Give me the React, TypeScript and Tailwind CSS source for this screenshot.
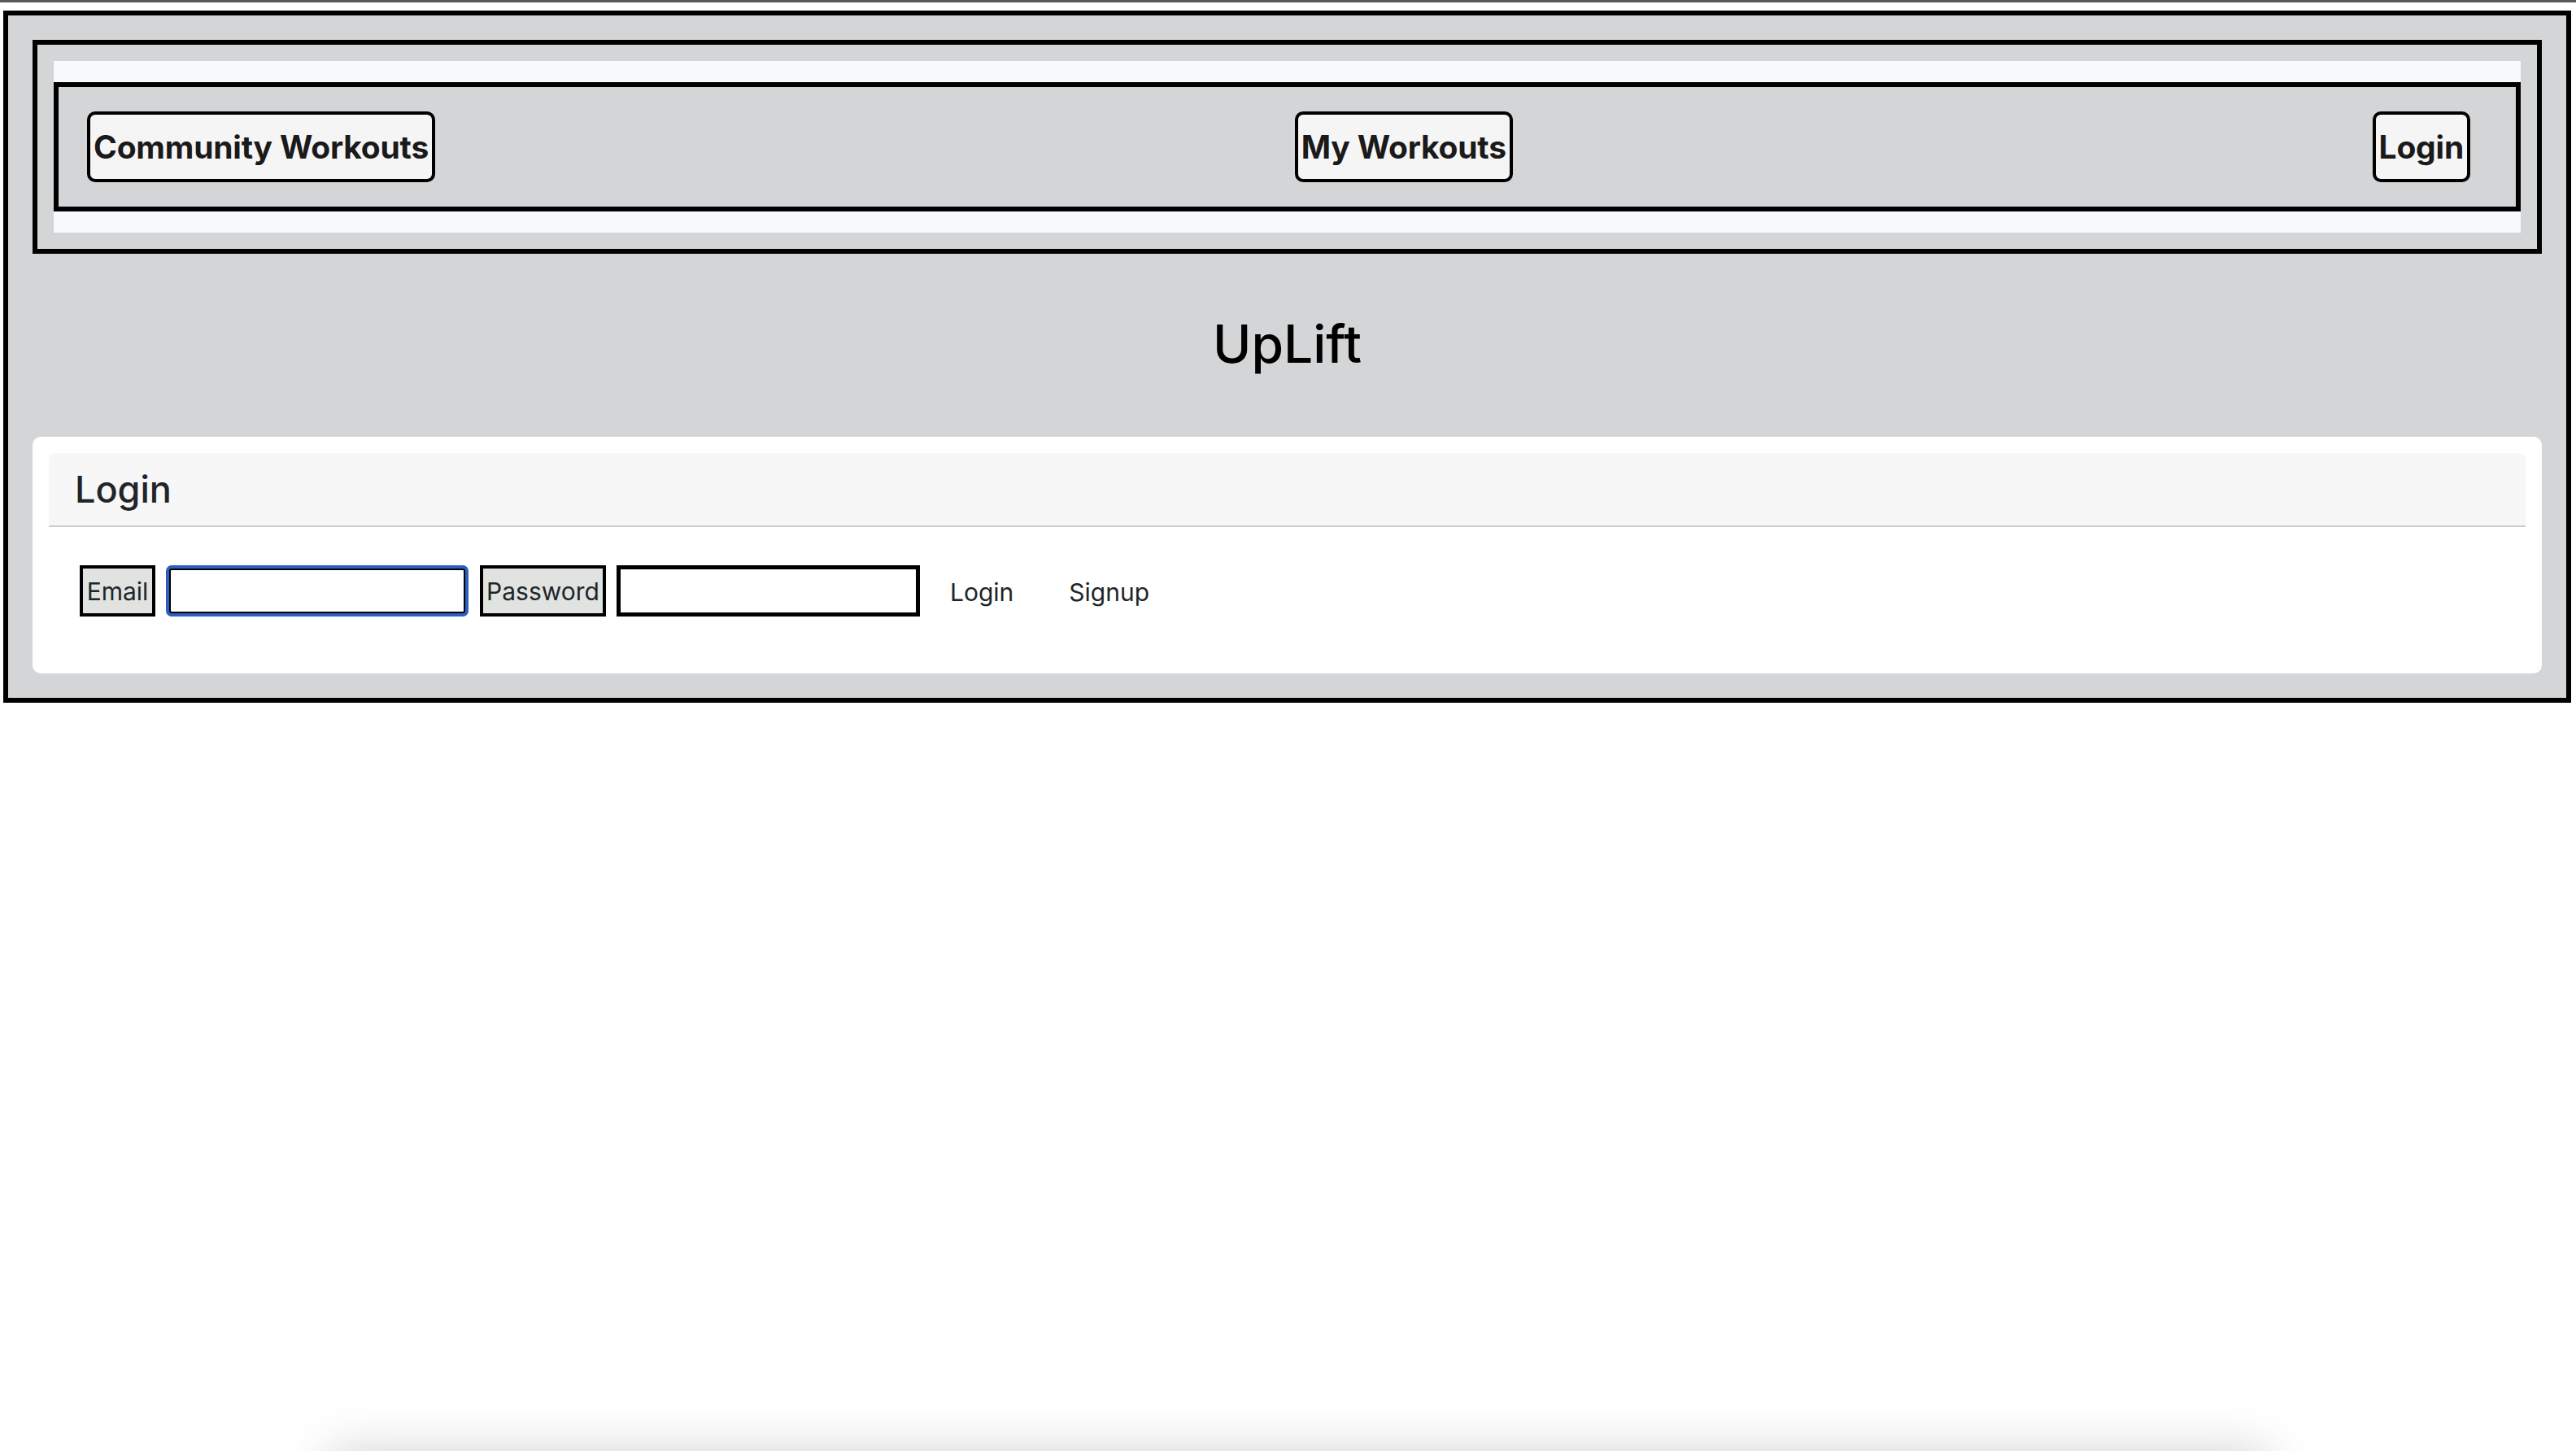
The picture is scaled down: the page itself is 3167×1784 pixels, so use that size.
import React from "react";

function NavButton({ children }: { children: React.ReactNode }) {
  return (
    <button className="flex h-[87px] items-center rounded-[10px] border-[4px] border-black bg-[#f6f5f6] px-[4px] text-[39px] font-bold leading-none tracking-[-0.2px] text-[#1a1a1a]">
      {children}
    </button>
  );
}

export default function App() {
  return (
    <div className="relative min-h-screen bg-white [font-family:Inter,'Liberation_Sans',sans-serif]">
      <div className="h-[3px] bg-[#58585a]" />
      <div className="mt-[10px] ml-[4px] mr-[6px] border-[6px] border-black bg-[#d4d5d7] p-[30px]">
        <div className="border-[6px] border-black p-[20px]">
          <div className="bg-[#f8f9fa] py-[26px]">
            <nav className="flex items-center justify-between border-[6px] border-black bg-[#d4d5d7] py-[30px] pl-[35px] pr-[56px]">
              <NavButton>Community Workouts</NavButton>
              <NavButton>My Workouts</NavButton>
              <NavButton>Login</NavButton>
            </nav>
          </div>
        </div>

        <h1 className="mt-[72px] mb-[76px] text-center text-[64px] font-medium leading-[77px] text-black">
          UpLift
        </h1>

        <div className="rounded-[10px] bg-white px-[20px] pt-[20px]">
          <div className="flex h-[91px] items-center rounded-t-[8px] border-b-2 border-[#cdcdcd] bg-[#f7f7f7] pl-[32px] text-[45px] font-medium text-[#212529]">
            Login
          </div>
          <div className="flex items-center pl-[38px] pt-[47px] pb-[70px] text-[30px] text-[#212529]">
            <div className="flex h-[63px] w-[93px] items-center justify-center border-[4px] border-black bg-[#e0e3df] pt-[2px]">
              Email
            </div>
            <div className="ml-[13px] h-[63px] w-[372px] rounded-[7px] bg-[#2b5fc2] p-[4px]">
              <input className="h-full w-full rounded-[3px] border-2 border-black bg-white outline-none" />
            </div>
            <div className="ml-[14px] flex h-[63px] w-[155px] items-center justify-center border-[4px] border-black bg-[#e0e3df] pt-[2px]">
              Password
            </div>
            <input
              type="password"
              className="ml-[13px] h-[63px] w-[373px] border-[5px] border-black bg-white outline-none"
            />
            <button className="ml-[3px] px-[34px] pt-[4px] text-[30px] text-[#212529]">Login</button>
            <button className="px-[34px] pt-[4px] text-[30px] text-[#212529]">Signup</button>
          </div>
        </div>
      </div>
      <div className="fixed left-[404px] right-[379px] top-full h-[100px] bg-white shadow-[0_0_60px_rgba(0,0,0,0.18)]" />
    </div>
  );
}
